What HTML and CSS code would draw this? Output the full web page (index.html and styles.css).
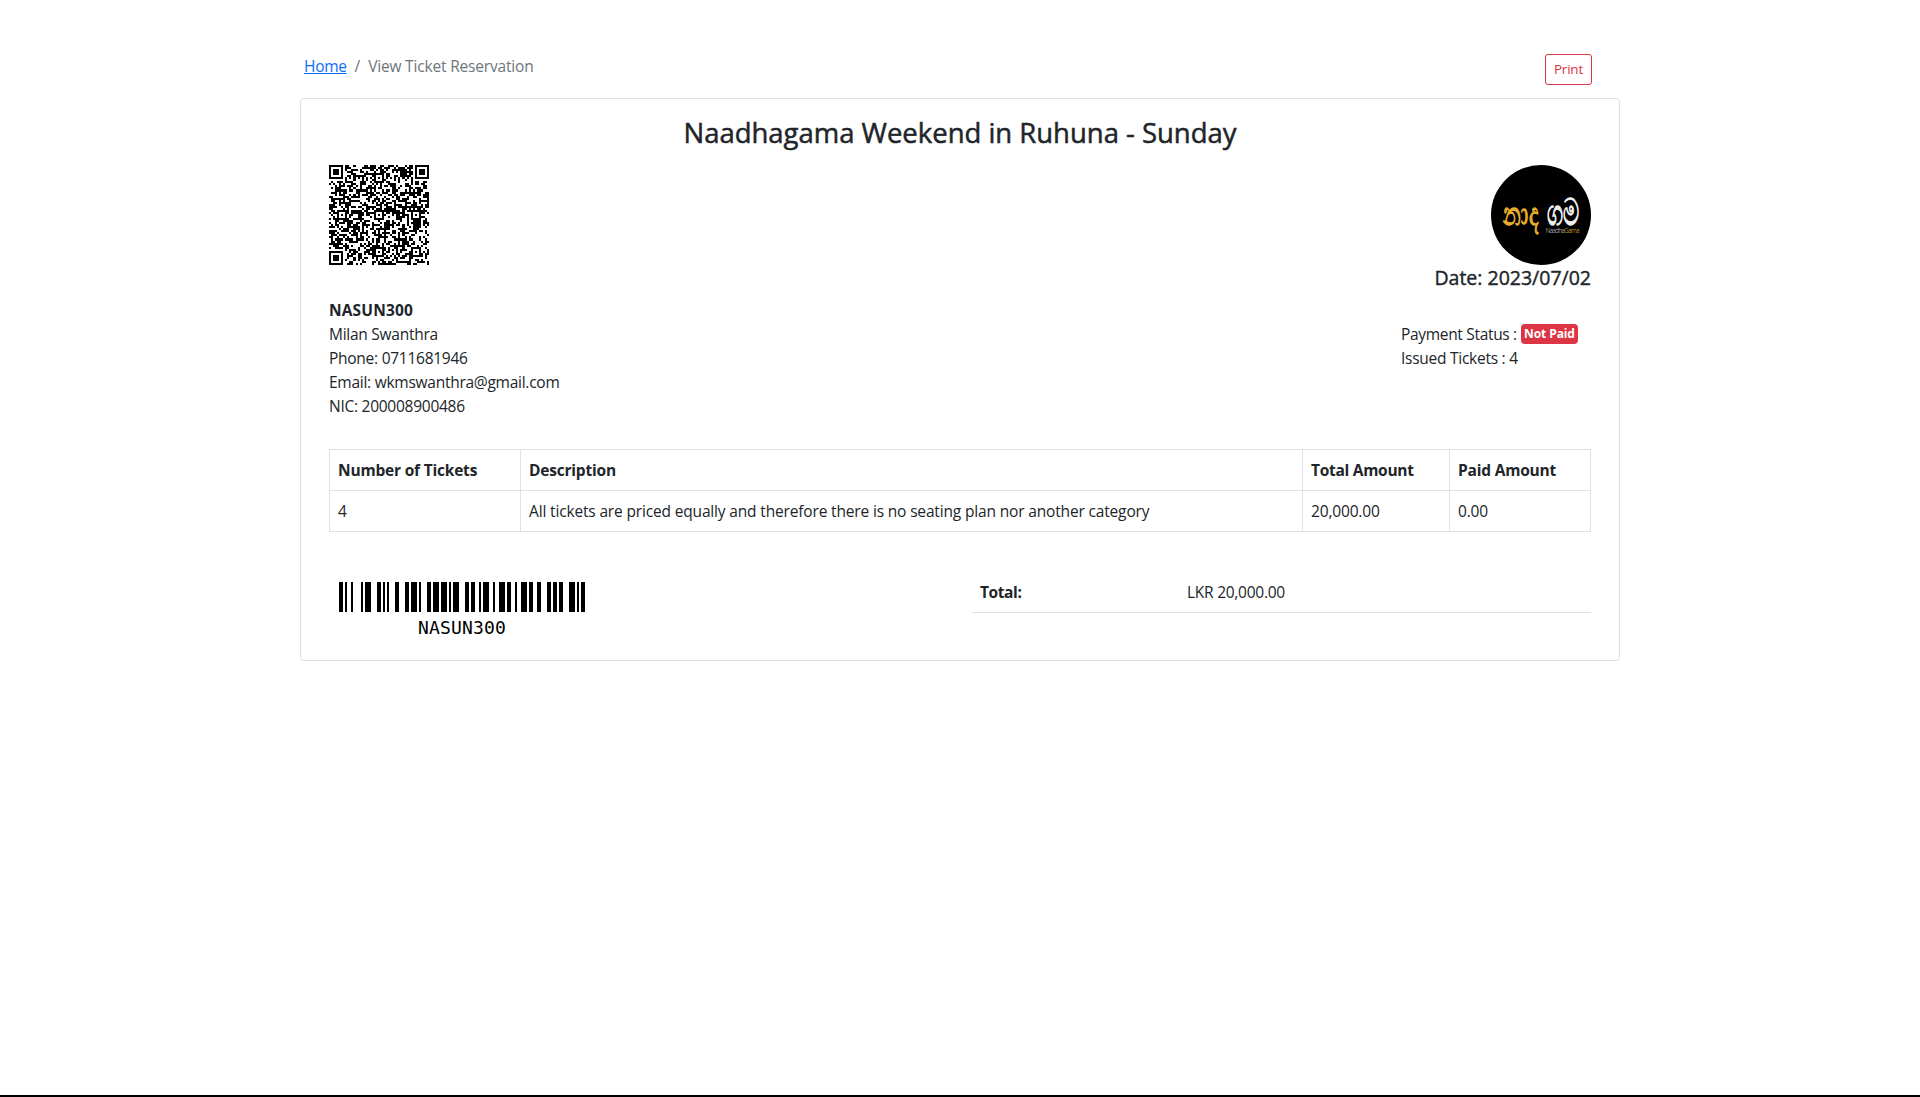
FILE: index.html
```html
<!DOCTYPE html>
<html lang="en">
<head>
<meta charset="utf-8">
<title>View Ticket Reservation</title>
<link rel="stylesheet" href="styles.css">
</head>
<body>
<main class="container">
  <header class="topbar">
    <nav class="breadcrumb"><a href="#">Home</a><span class="sep">/</span><span class="current">View Ticket Reservation</span></nav>
    <button class="btn-print" type="button">Print</button>
  </header>
  <section class="card">
    <h3 class="title"><span>Naadhagama Weekend in Ruhuna - Sunday</span></h3>
    <div class="codes">
      <svg class="qr" id="qr" viewBox="0 0 49 49" shape-rendering="crispEdges"><path id="qr-path"/></svg>
      <div class="brand">
        <svg class="logo" viewBox="0 0 100 100">
          <circle cx="50" cy="50" r="50" fill="#000"/>
          <text transform="translate(12 60) scale(1 1.45)" class="logo-gold" textLength="36" lengthAdjust="spacingAndGlyphs">නාද</text>
          <text transform="translate(56 60) scale(1 1.6)" class="logo-white" textLength="32" lengthAdjust="spacingAndGlyphs">ගම</text>
          <text x="54.500" y="67.500" class="logo-small" textLength="34">Naadha<tspan fill="#b58a22">Gama</tspan></text>
        </svg>
        <h5 class="date">Date: 2023/07/02</h5>
      </div>
    </div>
    <div class="details">
      <address class="customer">
        <strong>NASUN300</strong>
        <span>Milan Swanthra</span>
        <span>Phone: 0711681946</span>
        <span>Email: wkmswanthra@gmail.com</span>
        <span>NIC: 200008900486</span>
      </address>
      <div class="status">
        <div class="status-row"><span>Payment Status :</span><span class="badge">Not Paid</span></div>
        <div>Issued Tickets : 4</div>
      </div>
    </div>
    <table class="tickets">
      <colgroup><col class="c-num"><col class="c-desc"><col class="c-total"><col class="c-paid"></colgroup>
      <thead><tr><th>Number of Tickets</th><th>Description</th><th>Total Amount</th><th>Paid Amount</th></tr></thead>
      <tbody><tr><td>4</td><td>All tickets are priced equally and therefore there is no seating plan nor another category</td><td>20,000.00</td><td>0.00</td></tr></tbody>
    </table>
    <div class="summary">
      <figure class="barcode">
        <svg class="bars" viewBox="0 0 123 15" preserveAspectRatio="none" shape-rendering="crispEdges"><path id="bar-path"/></svg>
        <figcaption>NASUN300</figcaption>
      </figure>
      <div class="totals"><strong>Total:</strong><span>LKR 20,000.00</span></div>
    </div>
  </section>
</main>
<script src="codes.js"></script>
</body>
</html>
```
FILE: styles.css
```css
* { box-sizing: border-box; }
body {
  margin: 0;
  min-height: 1097px;
  border-bottom: 2px solid #000;
  background: #fff;
  color: #212529;
  font: 15.5px/24px "Open Sans", "Noto Sans", sans-serif;
  letter-spacing: -0.26px;
}
.container { width: 1320px; margin: 0 auto; padding-top: 54px; }
.topbar { display: flex; justify-content: space-between; align-items: flex-start; height: 44px; padding: 0 28px 0 4px; }
.breadcrumb { display: flex; gap: 8px; color: #6c757d; letter-spacing: -0.18px; }
.breadcrumb a { color: #0d6efd; text-decoration: underline; letter-spacing: -0.3px; }
.btn-print {
  width: 47px; height: 31px; padding: 0;
  border: 1px solid #dc3545; border-radius: 3px;
  background: #fff; color: #dc3545;
  font: 13.5px/21px "Open Sans", sans-serif; letter-spacing: -0.2px;
}
.card { height: 563px; padding: 17px 28px 16px; border: 1px solid #dfdfdf; border-radius: 4px; }
.title { margin: 0; text-align: center; font-size: 27.5px; line-height: 34px; font-weight: 500; height: 42px; letter-spacing: -0.02px; -webkit-text-stroke: 0.5px #212529; }
.codes { display: flex; justify-content: space-between; align-items: flex-start; margin-top: 7px; height: 127px; }
.qr { width: 100px; height: 100px; }
.brand { display: flex; flex-direction: column; align-items: flex-end; }
.logo { width: 100px; height: 100px; }
.logo-gold, .logo-white { font-size: 23px; letter-spacing: 0; stroke-width: 0.9px; }
.logo-gold { fill: #e5ae2c; stroke: #e5ae2c; }
.logo-white { fill: #eee; stroke: #eee; }
.logo-small { font-size: 6.5px; letter-spacing: 0; fill: #999; }
.date { margin: 0; font-size: 19.5px; line-height: 25px; font-weight: 500; letter-spacing: 0; -webkit-text-stroke: 0.4px #212529; }
.details { display: flex; justify-content: space-between; margin-top: 6px; height: 151px; }
.customer { display: flex; flex-direction: column; font-style: normal; }
.customer strong { letter-spacing: 0.15px; }
.status { width: 190px; padding-top: 24px; }
.status-row { display: flex; align-items: center; gap: 4px; height: 24px; }
.status-row span:first-child { width: 116px; white-space: nowrap; letter-spacing: -0.32px; }
.badge { width: 57px; height: 20px; border-radius: 4px; background: #dc3545; color: #fff; font-size: 12px; line-height: 20px; font-weight: 700; text-align: center; letter-spacing: -0.1px; }
.tickets { width: 1262px; border-collapse: collapse; table-layout: fixed; }
.c-num { width: 191px; }
.c-desc { width: 782px; }
.c-total { width: 147px; }
.tickets th, .tickets td { padding: 8px; border: 1px solid #dee2e6; text-align: left; white-space: nowrap; }
.tickets td { letter-spacing: -0.16px; }
.tickets th { letter-spacing: -0.2px; }
.tickets th:nth-child(3) { letter-spacing: -0.28px; }
.summary { display: flex; justify-content: space-between; margin-top: 40px; }
.barcode { display: flex; flex-direction: column; align-items: center; margin: 10px 0 0 10px; width: 246px; }
.bars { width: 246px; height: 30px; }
.barcode figcaption { color: #000; font: 18px/24px "DejaVu Sans Mono", monospace; letter-spacing: 0.15px; padding-top: 4px; }
.totals { display: flex; width: 619px; height: 41px; padding: 8px; border-bottom: 1px solid #dee2e6; }
.totals strong { width: 207px; letter-spacing: -0.4px; }
```
FILE: codes.js
```js
// Code 128 bars: start B, N A S U N 3 0 0, checksum, stop
const widths = '211214113321111323213113213131113321221132123122123122' + '232121' + '2331112';
let x = 0, bars = '';
[...widths].forEach((w, i) => {
  if (i % 2 === 0) bars += `M${x} 0h${w}v15h-${w}z`;
  x += +w;
});
document.getElementById('bar-path').setAttribute('d', bars);

// QR symbol, 49 x 49 modules
const N = 49;
const grid = [];
let seed = 87191;
for (let r = 0; r < N; r++) {
  grid.push([]);
  for (let c = 0; c < N; c++) {
    seed = (seed * 1103515245 + 12345) % 2147483648;
    grid[r].push((seed >> 16) % 100 < 51);
  }
}
for (let i = 8; i < N - 8; i++) grid[6][i] = grid[i][6] = i % 2 === 0;
const rings = (cy, cx, radius, dark) => {
  for (let dy = -radius; dy <= radius; dy++)
    for (let dx = -radius; dx <= radius; dx++) {
      const y = cy + dy, xx = cx + dx;
      if (y < 0 || xx < 0 || y >= N || xx >= N) continue;
      grid[y][xx] = dark(Math.max(Math.abs(dx), Math.abs(dy)));
    }
};
[[6, 24], [24, 6], [24, 24], [24, 42], [42, 24], [42, 42]].forEach(([a, b]) => rings(a, b, 2, d => d !== 1));
[[3, 3], [3, 45], [45, 3]].forEach(([a, b]) => rings(a, b, 4, d => d < 2 || d === 3));
let modules = '';
grid.forEach((row, r) => row.forEach((on, c) => { if (on) modules += `M${c} ${r}h1v1h-1z`; }));
document.getElementById('qr-path').setAttribute('d', modules);
```
